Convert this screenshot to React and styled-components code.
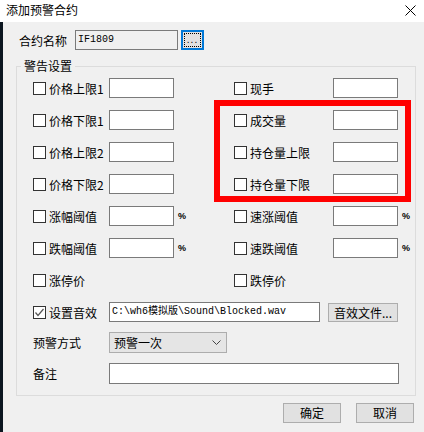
import React from 'react'
import styled, { createGlobalStyle } from 'styled-components'

const GlobalStyle = createGlobalStyle`
  html, body {
    margin: 0;
    padding: 0;
    background: #f0f0f0;
  }
  body {
    font-family: "Noto Sans CJK SC", "Noto Sans", sans-serif;
    font-size: 12px;
    color: #000;
  }
`

const leftRows = [
  { left: '价格上限1', right: '现手' },
  { left: '价格下限1', right: '成交量' },
  { left: '价格上限2', right: '持仓量上限' },
  { left: '价格下限2', right: '持仓量下限' },
  { left: '涨幅阈值', right: '速涨阈值', pct: true },
  { left: '跌幅阈值', right: '速跌阈值', pct: true },
]

function Check({ checked }) {
  return (
    <CheckBox>
      {checked && (
        <svg width="11" height="11" viewBox="0 0 11 11">
          <path d="M1.5 5.5 L4 8.5 L9.5 2" fill="none" stroke="#555" strokeWidth="1.2" />
        </svg>
      )}
    </CheckBox>
  )
}

function App() {
  return (
    <Window>
      <GlobalStyle />
      <TitleBar>
        <Title>添加预警合约</Title>
        <CloseIcon width="11" height="11" viewBox="0 0 11 11">
          <path d="M0.5 0.5 L10.5 10.5 M10.5 0.5 L0.5 10.5" stroke="#000" strokeWidth="1" />
        </CloseIcon>
      </TitleBar>
      <Body>
        <EdgeStrip />
        <Content>
          <NameRow>
            <NameLabel>合约名称</NameLabel>
            <NameInput>IF1809</NameInput>
            <DotsButton>
              <FocusRing>...</FocusRing>
            </DotsButton>
          </NameRow>

          <Group>
            <Legend>警告设置</Legend>
            <Rows>
              {leftRows.map((r) => (
                <Row key={r.left}>
                  <CheckLabel>
                    <Check />
                    <span>{r.left}</span>
                  </CheckLabel>
                  <TextBox />
                  <Pct>{r.pct ? '%' : ''}</Pct>
                  <CheckLabel>
                    <Check />
                    <span>{r.right}</span>
                  </CheckLabel>
                  <TextBox />
                  <Pct>{r.pct ? '%' : ''}</Pct>
                </Row>
              ))}
              <Row>
                <CheckLabel>
                  <Check />
                  <span>涨停价</span>
                </CheckLabel>
                <CheckLabel col={4}>
                  <Check />
                  <span>跌停价</span>
                </CheckLabel>
              </Row>
              <FlexRow>
                <CheckLabel width={76}>
                  <Check checked />
                  <span>设置音效</span>
                </CheckLabel>
                <PathInput>C:\wh6模拟版\Sound\Blocked.wav</PathInput>
                <SoundButton>音效文件...</SoundButton>
              </FlexRow>
              <FlexRow tall>
                <PlainLabel>预警方式</PlainLabel>
                <SelectBox>
                  <span>预警一次</span>
                  <svg width="9" height="6" viewBox="0 0 9 6">
                    <path d="M0.5 0.5 L4.5 4.5 L8.5 0.5" fill="none" stroke="#444" strokeWidth="1" />
                  </svg>
                </SelectBox>
              </FlexRow>
              <FlexRow tall>
                <PlainLabel>备注</PlainLabel>
                <NoteInput />
              </FlexRow>
            </Rows>
          </Group>

          <Footer>
            <DialogButton>确定</DialogButton>
            <DialogButton>取消</DialogButton>
          </Footer>
        </Content>
      </Body>
      <Highlight />
    </Window>
  )
}

export default App

const Window = styled.div`
  position: relative;
  width: 424px;
  height: 432px;
  background: #f0f0f0;
  overflow: hidden;
`

const TitleBar = styled.div`
  height: 22px;
  background: #fff;
  display: flex;
  align-items: center;
  justify-content: space-between;
  padding: 0 8px 0 6px;
`

const Title = styled.div`
  font-size: 12px;
  line-height: 14px;
  margin-top: -2px;
`

const CloseIcon = styled.svg`
  margin-top: -1px;
`

const Body = styled.div`
  display: flex;
  height: 410px;
`

const EdgeStrip = styled.div`
  width: 3px;
  background: #0c1620;
`

const Content = styled.div`
  flex: 1;
  display: flex;
  flex-direction: column;
`

const NameRow = styled.div`
  display: flex;
  align-items: center;
  margin-top: 8px;
  padding-left: 16px;
  height: 20px;
`

const NameLabel = styled.div`
  width: 56px;
`

const NameInput = styled.div`
  box-sizing: border-box;
  width: 103px;
  height: 20px;
  border: 1px solid #7a7a7a;
  background: #f0f0f0;
  font-family: "Liberation Mono", monospace;
  font-size: 10px;
  line-height: 18px;
  padding-left: 2px;
`

const DotsButton = styled.div`
  box-sizing: border-box;
  width: 23px;
  height: 20px;
  margin-left: 3px;
  border: 2px solid #0078d7;
  background: #e1e1e1;
  padding: 1px;
`

const FocusRing = styled.div`
  height: 100%;
  border: 1px dotted #000;
  box-sizing: border-box;
  font-family: "Liberation Sans", sans-serif;
  font-size: 10px;
  line-height: 12px;
  text-align: center;
  letter-spacing: 1px;
`

const Group = styled.fieldset`
  box-sizing: border-box;
  width: 400px;
  margin: 8px 0 0 13px;
  border: 1px solid #dcdcdc;
  padding: 4px 0 11px 4px;
  min-inline-size: 0;
`

const Legend = styled.legend`
  padding: 0 3px;
  margin-left: 0;
  font-size: 12px;
  line-height: 16px;
`

const Rows = styled.div`
  display: flex;
  flex-direction: column;
  padding-left: 12px;
  gap: 12px;
`

const Row = styled.div`
  display: grid;
  grid-template-columns: 76px 65px 60px 99px 65px 1fr;
  align-items: center;
  height: 20px;
`

const FlexRow = styled.div`
  display: flex;
  align-items: center;
  height: ${(p) => (p.tall ? '21px' : '20px')};
  margin-top: ${(p) => (p.tall ? '-2px' : '0')};
`

const CheckLabel = styled.label`
  display: flex;
  align-items: center;
  gap: 3px;
  white-space: nowrap;
  grid-column: ${(p) => p.col || 'auto'};
  width: ${(p) => (p.width ? `${p.width}px` : 'auto')};
  flex-shrink: 0;
`

const CheckBox = styled.span`
  box-sizing: border-box;
  width: 13px;
  height: 13px;
  border: 1px solid #333;
  background: #fff;
  display: flex;
  align-items: center;
  justify-content: center;
`

const TextBox = styled.div`
  box-sizing: border-box;
  width: 65px;
  height: 20px;
  border: 1px solid #7a7a7a;
  background: #fff;
`

const Pct = styled.span`
  padding-left: 4px;
  font-family: "Liberation Sans", sans-serif;
  font-size: 9px;
  font-weight: bold;
`

const PathInput = styled.div`
  box-sizing: border-box;
  width: 211px;
  height: 20px;
  border: 1px solid #7a7a7a;
  background: #fff;
  font-family: "Liberation Mono", "Noto Sans CJK SC", monospace;
  font-size: 10px;
  line-height: 18px;
  padding-left: 2px;
  white-space: nowrap;
  overflow: hidden;
`

const SoundButton = styled.div`
  box-sizing: border-box;
  width: 70px;
  height: 19px;
  margin-left: 8px;
  border: 1px solid #adadad;
  background: #e1e1e1;
  text-align: center;
  line-height: 17px;
  white-space: nowrap;
`

const PlainLabel = styled.div`
  width: 76px;
  flex-shrink: 0;
`

const SelectBox = styled.div`
  box-sizing: border-box;
  width: 118px;
  height: 21px;
  border: 1px solid #adadad;
  background: #e5e5e5;
  display: flex;
  align-items: center;
  justify-content: space-between;
  padding: 0 5px 0 4px;
`

const NoteInput = styled.div`
  box-sizing: border-box;
  width: 290px;
  height: 21px;
  border: 1px solid #7a7a7a;
  background: #fff;
`

const Footer = styled.div`
  display: flex;
  justify-content: flex-end;
  gap: 15px;
  margin-top: 7px;
  padding-right: 10px;
`

const DialogButton = styled.div`
  box-sizing: border-box;
  width: 58px;
  height: 20px;
  border: 1px solid #adadad;
  background: #e1e1e1;
  text-align: center;
  line-height: 18px;
`

const Highlight = styled.div`
  position: absolute;
  left: 214px;
  top: 100px;
  width: 197px;
  height: 102px;
  box-sizing: border-box;
  border: 6px solid #ff0000;
  pointer-events: none;
`
